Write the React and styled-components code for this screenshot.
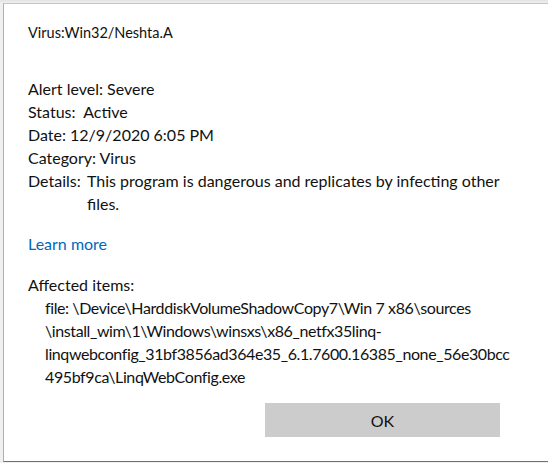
import React from "react";
import styled, { createGlobalStyle } from "styled-components";

const Global = createGlobalStyle`
  html, body { margin: 0; padding: 0; background: #ececec; }
  body { width: 548px; height: 463px; overflow: hidden; }
  #root { height: 463px; }
`;

const Page = styled.div`
  height: 463px;
  padding: 3px 0 0 3px;
  box-sizing: border-box;
  background: linear-gradient(#e2e2e2, #f0f0f0 3px);
`;

const Dialog = styled.div`
  box-sizing: border-box;
  width: 560px;
  height: 459px;
  background: #ffffff;
  border-top: 1px solid #c4c4c4;
  border-left: 1px solid #b0b0b0;
  border-bottom: 1px solid #707070;
  padding: 19px 0 0 24px;
  font-family: "Lato", "Noto Sans", sans-serif;
  font-size: 16px;
  color: #111;
  display: flex;
  flex-direction: column;
`;

const Title = styled.div`
  line-height: 20px;
  font-size: 14.5px;
`;

const InfoBlock = styled.div`
  margin-top: 34px;
  display: flex;
  flex-direction: column;
`;

const Line = styled.div`
  line-height: 23px;
  white-space: pre;
`;

const DetailRow = styled.div`
  display: flex;
  line-height: 23px;
  width: 500px;
`;

const DetailLabel = styled.span`
  flex: none;
  width: 59px;
`;

const DetailValue = styled.span`
  flex: 1;
`;

const Link = styled.a`
  margin-top: 17px;
  line-height: 23px;
  color: #0067c0;
  text-decoration: none;
  width: max-content;
`;

const Section = styled.div`
  margin-top: 18px;
  line-height: 23px;
`;

const PathText = styled.div`
  padding-left: 17px;
  line-height: 23px;
  white-space: nowrap;
  letter-spacing: -0.4px;
`;

const ButtonRow = styled.div`
  margin-top: 15px;
  display: flex;
  width: 472px;
  justify-content: flex-end;
`;

const Button = styled.button`
  width: 235px;
  height: 34px;
  background: #cccccc;
  border: none;
  font-family: "Lato", "Noto Sans", sans-serif;
  font-size: 16px;
  color: #111;
  padding: 0;
`;

export default function App() {
  return (
    <>
      <Global />
      <Page>
        <Dialog>
          <Title>Virus:Win32/Neshta.A</Title>
          <InfoBlock>
            <Line>Alert level: Severe</Line>
            <Line>{"Status:  Active"}</Line>
            <Line>Date: 12/9/2020 6:05 PM</Line>
            <Line>Category: Virus</Line>
            <DetailRow>
              <DetailLabel>Details:</DetailLabel>
              <DetailValue>
                This program is dangerous and replicates by infecting other files.
              </DetailValue>
            </DetailRow>
          </InfoBlock>
          <Link href="#">Learn more</Link>
          <Section>Affected items:</Section>
          <PathText>
            file: \Device\HarddiskVolumeShadowCopy7\Win 7 x86\sources
            <br />
            \install_wim\1\Windows\winsxs\x86_netfx35linq-
            <br />
            linqwebconfig_31bf3856ad364e35_6.1.7600.16385_none_56e30bcc
            <br />
            495bf9ca\LinqWebConfig.exe
          </PathText>
          <ButtonRow>
            <Button>OK</Button>
          </ButtonRow>
        </Dialog>
      </Page>
    </>
  );
}
